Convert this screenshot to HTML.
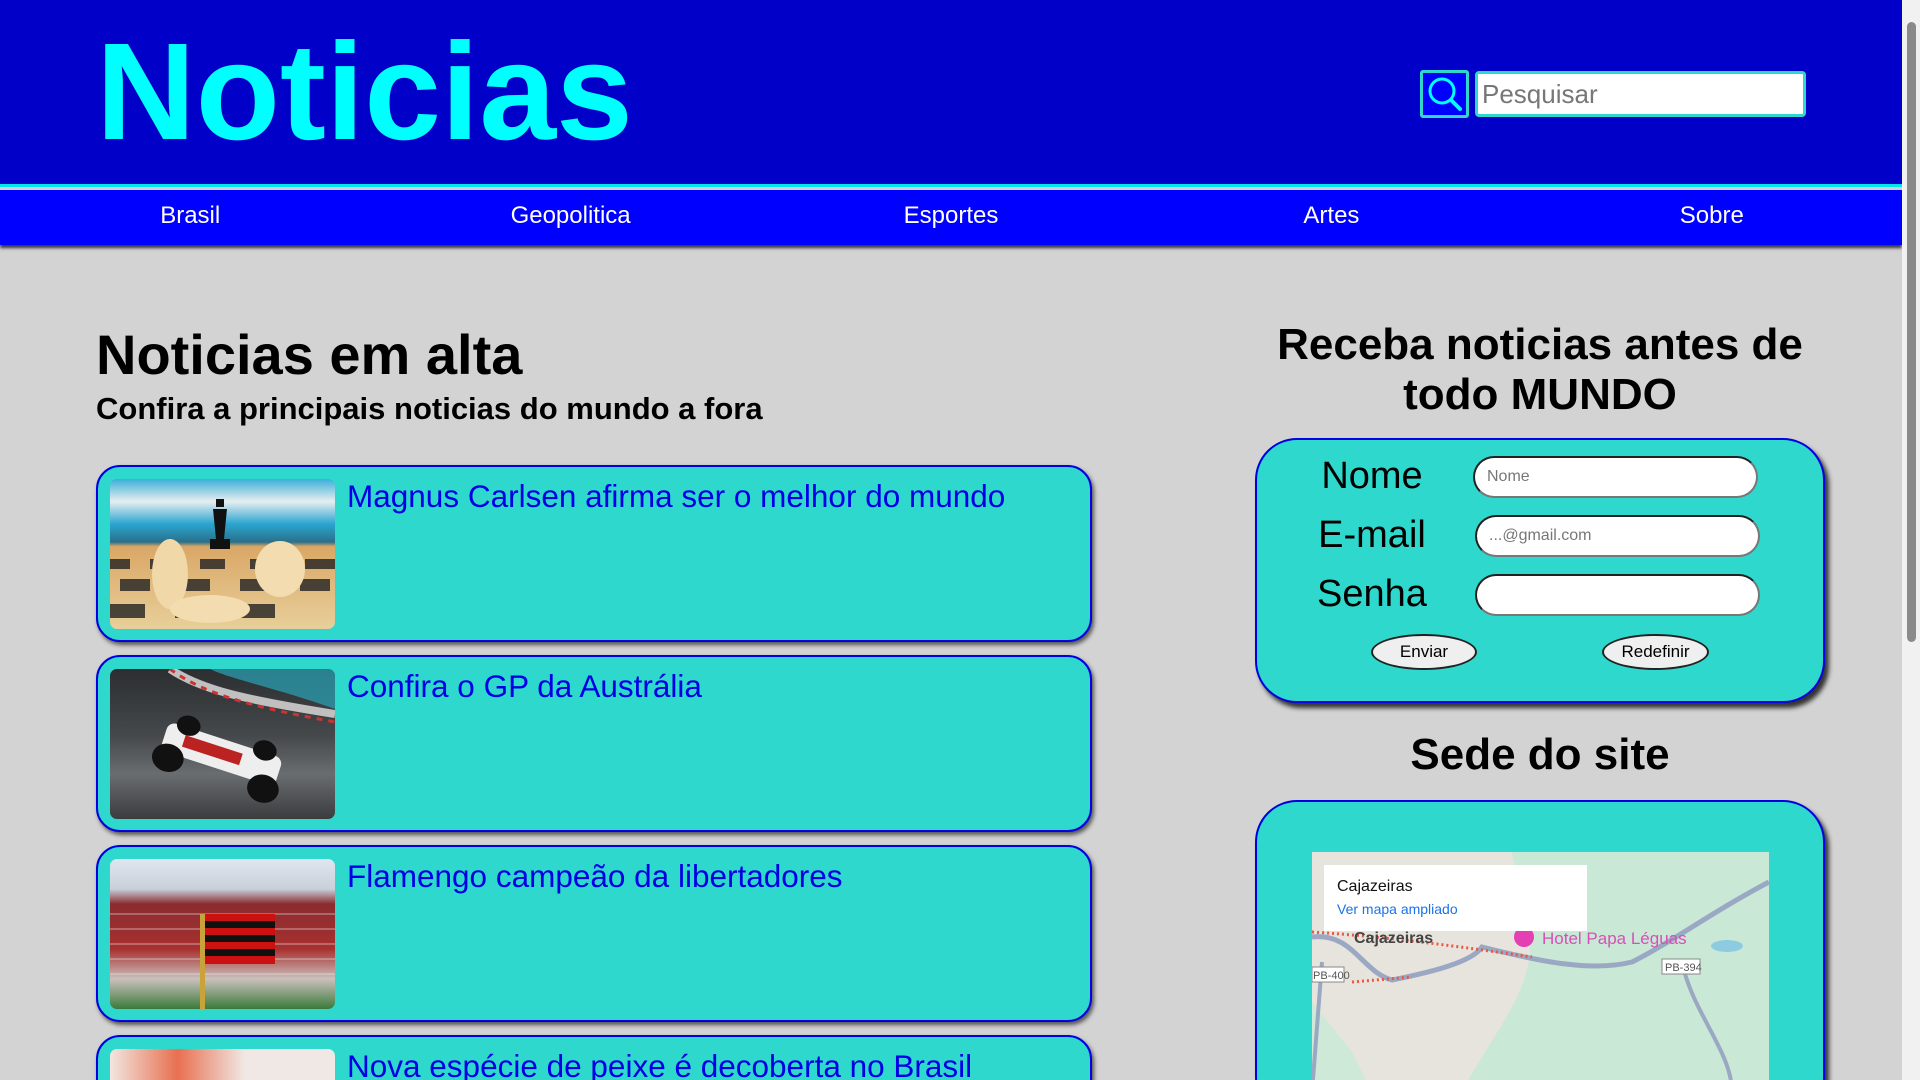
<!DOCTYPE html>
<html><head><meta charset="utf-8"><style>
*{box-sizing:border-box;margin:0;padding:0}
html{width:1920px;height:1080px;overflow:hidden}
body{width:1920px;height:1080px;overflow:hidden;background:#d3d3d3;font-family:"Liberation Sans",Arial,sans-serif;position:relative}
.hdr{position:absolute;left:0;top:0;width:1902px;height:187px;background:#0000c8;border-bottom:3px solid #00e5ee}
.hdr h1{position:absolute;left:96px;top:12px;font-size:138px;color:#00ffff;font-weight:bold;line-height:160px}
.sbtn{position:absolute;left:1420px;top:70px;width:49px;height:48px;background:#0000ff;border:3px solid #2ed8cc;border-radius:3px}
.sin{position:absolute;left:1475px;top:71px;width:331px;height:46px;background:#fff;border:3px solid #2ed8cc;border-radius:4px;font-size:26px;color:#777;padding:5px 0 0 4px}
.nav{position:absolute;left:0;top:190px;width:1902px;height:55px;background:#0000ff;display:flex;box-shadow:0 3px 3px #333}
.nav div{flex:1;text-align:center;color:#fff;font-size:24px;line-height:52px}
.sb{position:absolute;right:0;top:0;width:18px;height:1080px;background:#f1f1f1}
.sb i{position:absolute;left:5px;top:22px;width:9px;height:620px;background:#8a8a8a;border-radius:5px}
h2{position:absolute;font-weight:bold;color:#000}
.card{position:absolute;left:96px;width:996px;height:177px;background:#2ed8cc;border:2px solid #0000e0;border-radius:24px;box-shadow:2px 3px 4px #555}
.card .im{position:absolute;left:12px;top:12px;width:225px;height:150px;border-radius:7px;overflow:hidden}
.card span{position:absolute;left:249px;top:11px;font-size:31.5px;color:#0000e6}
.box{position:absolute;left:1255px;width:570px;background:#2ed8cc;border:2px solid #0000e0;border-radius:42px;box-shadow:4px 5px 5px #333}
.lbl{position:absolute;font-size:38px;color:#000;width:200px;text-align:center;left:1272px}
.inp{position:absolute;left:1473px;width:285px;height:42px;background:#fff;border:2px solid #222;border-bottom-color:#777;border-right-color:#777;border-radius:22px;font-size:16px;color:#777;padding:10px 0 0 12px}
.btn{position:absolute;top:634px;height:36px;background:#efefef;border:2px solid #222;border-radius:50%;font-size:17px;text-align:center;line-height:32px}
</style></head><body>
<div class="hdr"><h1>Noticias</h1>
<div class="sbtn"><svg width="43" height="42" viewBox="0 0 43 42"><circle cx="19" cy="18" r="12" fill="none" stroke="#00ffff" stroke-width="3"/><line x1="28" y1="27" x2="37" y2="36" stroke="#00ffff" stroke-width="4" stroke-linecap="round"/></svg></div>
<div class="sin">Pesquisar</div></div>
<div class="nav"><div>Brasil</div><div>Geopolitica</div><div>Esportes</div><div>Artes</div><div>Sobre</div></div>
<div class="sb"><i></i></div>

<h2 style="left:96px;top:322px;font-size:56px">Noticias em alta</h2>
<h2 style="left:96px;top:391px;font-size:31px">Confira a principais noticias do mundo a fora</h2>

<div class="card" style="top:465px"><div class="im" style="background:linear-gradient(180deg,#3ab0d8 0%,#e8eef0 15%,#2aa5d0 30%,#2a6f8a 42%,#d9a766 45%,#e8cf9a 100%)">
<svg width="225" height="150"><g fill="#222" opacity=".8"><rect x="0" y="80" width="20" height="10"/><rect x="40" y="80" width="25" height="10"/><rect x="90" y="80" width="25" height="10"/><rect x="140" y="80" width="30" height="10"/><rect x="195" y="80" width="30" height="10"/><rect x="10" y="100" width="30" height="12"/><rect x="70" y="100" width="30" height="12"/><rect x="130" y="100" width="30" height="12"/><rect x="190" y="100" width="30" height="12"/><rect x="0" y="125" width="35" height="14"/><rect x="65" y="125" width="35" height="14"/><rect x="130" y="125" width="35" height="14"/></g><path d="M106 20h8v8h-8zM103 30h14l-3 30h6v10h-20v-10h6z" fill="#111"/><ellipse cx="60" cy="95" rx="18" ry="35" fill="#f0d8a8"/><ellipse cx="170" cy="90" rx="25" ry="28" fill="#f2dcb0"/><ellipse cx="100" cy="130" rx="40" ry="14" fill="#f2dcb0"/></svg></div><span>Magnus Carlsen afirma ser o melhor do mundo</span></div>

<div class="card" style="top:655px"><div class="im" style="background:linear-gradient(180deg,#2c2e30 0%,#45494b 45%,#6a6d6f 70%,#3a3c3e 100%)">
<svg width="225" height="150"><path d="M0 0L225 0 225 40C170 20 120 10 100 0z" fill="#2aa4b8" opacity=".7"/><path d="M60 0C90 20 130 30 225 45" stroke="#c0c0c0" stroke-width="8" fill="none"/><path d="M60 0C90 22 130 36 225 53" stroke="#c33" stroke-width="3" stroke-dasharray="6 6" fill="none"/><g transform="rotate(18 110 90)"><rect x="50" y="70" width="120" height="30" rx="8" fill="#eee"/><rect x="70" y="78" width="60" height="12" fill="#b22"/><ellipse cx="60" cy="105" rx="16" ry="14" fill="#111"/><ellipse cx="160" cy="105" rx="16" ry="14" fill="#111"/><ellipse cx="70" cy="68" rx="12" ry="10" fill="#111"/><ellipse cx="150" cy="68" rx="12" ry="10" fill="#111"/></g></svg></div><span>Confira o GP da Austrália</span></div>

<div class="card" style="top:845px"><div class="im" style="background:linear-gradient(180deg,#dfe6ee 0%,#c9d0da 20%,#8a2c30 30%,#a8302f 60%,#c9c0bc 80%,#3b7a3a 100%)">
<svg width="225" height="150"><g stroke="#eee" stroke-width="1" opacity=".6"><line x1="0" y1="55" x2="225" y2="55"/><line x1="0" y1="70" x2="225" y2="70"/><line x1="0" y1="85" x2="225" y2="85"/><line x1="0" y1="100" x2="225" y2="100"/><line x1="0" y1="115" x2="225" y2="115"/></g><rect x="90" y="55" width="5" height="95" fill="#caa23a"/><g><rect x="95" y="55" width="70" height="50" fill="#c11"/><rect x="95" y="62" width="70" height="7" fill="#111"/><rect x="95" y="76" width="70" height="7" fill="#111"/><rect x="95" y="90" width="70" height="7" fill="#111"/></g></svg></div><span>Flamengo campeão da libertadores</span></div>

<div class="card" style="top:1035px"><div class="im" style="background:linear-gradient(90deg,#f2e6e0,#e87050 30%,#f0e8e4 60%)"></div><span>Nova espécie de peixe é decoberta no Brasil</span></div>

<h2 style="left:1255px;width:570px;text-align:center;top:320px;font-size:44px;line-height:50px">Receba noticias antes de todo MUNDO</h2>
<div class="box" style="top:438px;height:265px"></div>
<div class="lbl" style="top:455px">Nome</div>
<div class="lbl" style="top:514px">E-mail</div>
<div class="lbl" style="top:573px">Senha</div>
<div class="inp" style="top:456px">Nome</div>
<div class="inp" style="top:515px;left:1475px">...@gmail.com</div>
<div class="inp" style="top:574px;left:1475px"></div>
<div class="btn" style="left:1371px;width:106px">Enviar</div>
<div class="btn" style="left:1602px;width:107px">Redefinir</div>

<h2 style="left:1255px;width:570px;text-align:center;top:730px;font-size:44px">Sede do site</h2>
<div class="box" style="top:800px;height:320px"></div>
<div style="position:absolute;left:1312px;top:852px;width:457px;height:240px;background:#e6e4dc;overflow:hidden">
<svg width="457" height="240"><path d="M200 0L457 0 457 240 150 240C180 180 240 120 210 60z" fill="#c9e8d6"/><path d="M0 150L40 200 60 240 0 240z" fill="#cfe9d8"/>
<path d="M0 85C40 80 50 120 80 128C120 120 160 110 170 95C230 110 280 120 320 110C360 90 400 60 457 30" stroke="#9aa8c4" stroke-width="5" fill="none"/>
<path d="M10 110L0 240" stroke="#9aa8c4" stroke-width="4" fill="none"/><path d="M370 110C380 160 420 200 420 240" stroke="#9aa8c4" stroke-width="4" fill="none"/>
<path d="M0 80C80 85 150 95 220 105M40 130L100 125" stroke="#e54" stroke-width="3" stroke-dasharray="2 3" fill="none"/>
<circle cx="212" cy="85" r="10" fill="#e53fb4"/><text x="230" y="92" font-family="Liberation Sans" font-size="17" fill="#d94fb8">Hotel Papa Léguas</text>
<text x="42" y="91" font-family="Liberation Sans" font-size="16" fill="#444" font-weight="bold">Cajazeiras</text>
<rect x="350" y="107" width="38" height="15" fill="#fff" stroke="#888"/><text x="353" y="119" font-size="11" font-family="Liberation Sans" fill="#555">PB-394</text>
<rect x="0" y="115" width="32" height="15" fill="#fff" stroke="#888"/><text x="1" y="127" font-size="11" font-family="Liberation Sans" fill="#555">PB-400</text>
<ellipse cx="415" cy="94" rx="16" ry="6" fill="#8ccbe0"/>
<rect x="12" y="13" width="263" height="66" fill="#fff"/><text x="25" y="39" font-family="Liberation Sans" font-size="16" fill="#111">Cajazeiras</text><text x="25" y="62" font-family="Liberation Sans" font-size="14" fill="#1a73e8">Ver mapa ampliado</text></svg></div>
</body></html>
